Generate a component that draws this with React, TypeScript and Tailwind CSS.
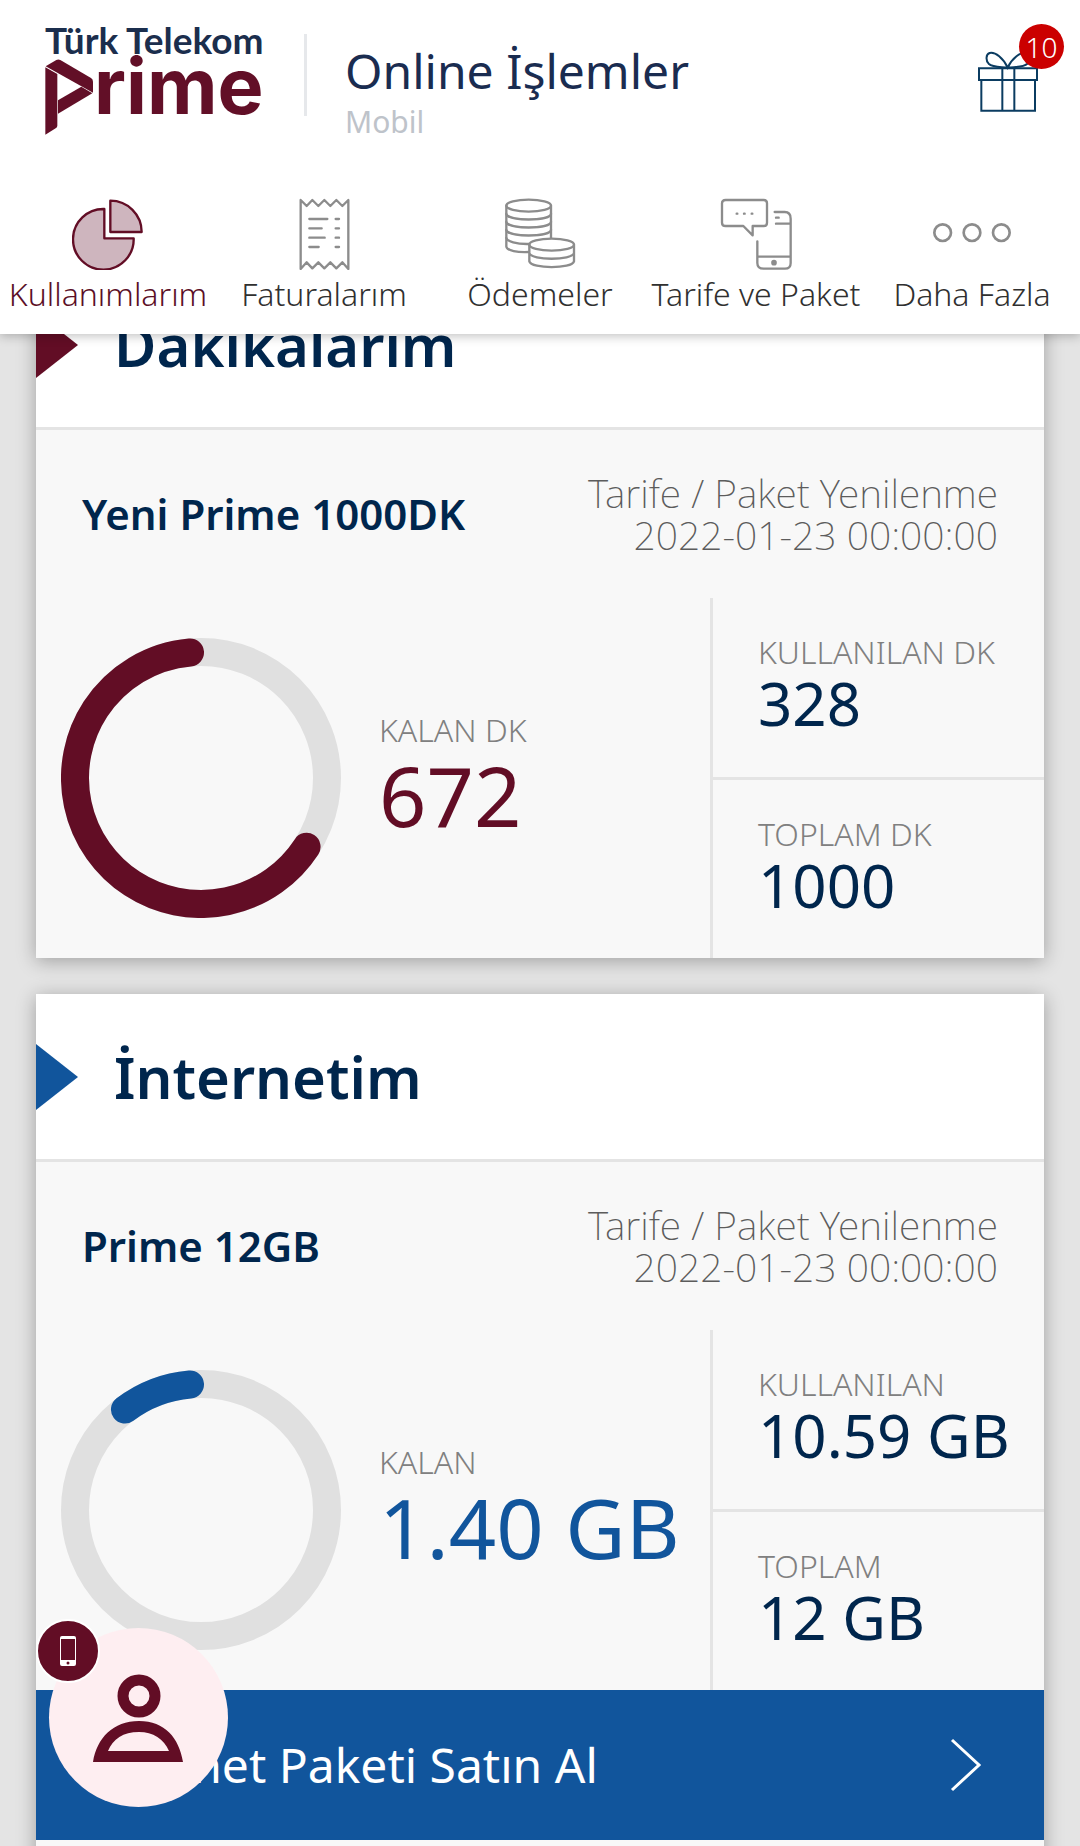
import type { ReactNode } from 'react'

type Accent = 'prime' | 'net'

type Usage = {
  id: string
  title: string
  plan: string
  renewal: string
  accent: Accent
  remaining: { label: string; value: string; ratio: number }
  used: { label: string; value: string }
  total: { label: string; value: string }
  action?: string
}

const USAGES: Usage[] = [
  {
    id: 'minutes',
    title: 'Dakikalarım',
    plan: 'Yeni Prime 1000DK',
    renewal: '2022-01-23 00:00:00',
    accent: 'prime',
    remaining: { label: 'KALAN DK', value: '672', ratio: 0.672 },
    used: { label: 'KULLANILAN DK', value: '328' },
    total: { label: 'TOPLAM DK', value: '1000' },
  },
  {
    id: 'internet',
    title: 'İnternetim',
    plan: 'Prime 12GB',
    renewal: '2022-01-23 00:00:00',
    accent: 'net',
    remaining: { label: 'KALAN', value: '1.40 GB', ratio: 0.117 },
    used: { label: 'KULLANILAN', value: '10.59 GB' },
    total: { label: 'TOPLAM', value: '12 GB' },
    action: 'İnternet Paketi Satın Al',
  },
]

const TEXT_ACCENT = { prime: 'text-[#620d25]', net: 'text-[#11559c]' }

function Logo() {
  return (
    <svg
      viewBox="24 23 660 330"
      className="h-[110px] w-[220px] shrink-0 overflow-visible"
      role="img"
      aria-label="Türk Telekom Prime"
    >
      <text x="27" y="102" fontSize="111" className="font-[Lato] font-bold fill-[#1b2e4d]">
        Türk Telekom
      </text>
      <g className="fill-[#620f27]">
        <path d="M29 138 61 119Q67 116 73 119L165 173Q171 177 171 184V217Z" />
        <path d="M28 141 64 161V316Q64 321 59 324L28 343Z" />
        <path d="M66 240 136 199 169 219 66 280Z" />
        <text x="174" y="280" fontSize="232" className="font-[Inter] font-bold">
          rime
        </text>
      </g>
    </svg>
  )
}

function GiftIcon() {
  return (
    <svg viewBox="54 93 180 183" className="w-[60px] h-[61px]" fill="none" stroke="#0b3c61" strokeWidth="6">
      <path d="M57 145H231V180H57ZM64 180V272H225V180M127 145V272M163 145V272" />
      <path d="M143 143C130 115 106 95 89 99C77 103 77 122 86 131C99 143 124 140 143 143C162 140 189 143 202 131C211 122 211 103 199 99C182 95 156 115 143 143Z" />
    </svg>
  )
}

function NavIcon({ viewBox, children }: { viewBox: string; children: ReactNode }) {
  return (
    <svg
      viewBox={viewBox}
      className="size-[72px]"
      fill="none"
      stroke="currentColor"
      strokeWidth="7"
      strokeLinecap="round"
      strokeLinejoin="round"
      aria-hidden="true"
    >
      {children}
    </svg>
  )
}

const NAV = [
  {
    label: 'Kullanımlarım',
    active: true,
    icon: (
      <NavIcon viewBox="37 22 216 216">
        <g fill="#ceb5be">
          <path d="M134 55V143H222A91 91 0 1 1 134 55Z" />
          <path d="M152 30V124H246A94 94 0 0 0 152 30Z" />
        </g>
      </NavIcon>
    ),
  },
  {
    label: 'Faturalarım',
    icon: (
      <NavIcon viewBox="686 22 216 216">
        <path d="M724 28 742 46 759 28 777 46 795 28 813 46 831 28 849 46 867 28V235L849 215 831 233 813 215 795 233 777 215 759 233 742 215 724 235Z" />
        <path d="M750 85H804M750 113H787M750 141H796M750 169H778M829 85H839M829 113H839M829 141H839M829 169H839" />
      </NavIcon>
    ),
  },
  {
    label: 'Ödemeler',
    icon: (
      <NavIcon viewBox="42 22 216 216">
        <ellipse cx="116" cy="45" rx="67" ry="18" />
        <path d="M49 45V168C52 180 82 186 117 184M183 45V142" />
        <path d="M49 70C54 92 178 92 183 70M49 94C54 116 178 116 183 94M49 118C54 140 178 140 183 118M49 142C52 152 78 161 117 160" />
        <ellipse cx="185" cy="162" rx="67" ry="18" />
        <path d="M118 162V212C124 235 246 235 252 212V162M118 187C124 210 246 210 252 187" />
      </NavIcon>
    ),
  },
  {
    label: 'Tarife ve Paket',
    icon: (
      <NavIcon viewBox="692 22 216 216">
        <path d="M709 28H823Q833 28 833 38V96Q833 106 823 106H790V134L762 106H709Q698 106 698 96V38Q698 28 709 28Z" />
        <path d="M742 69H744M764 69H766M787 69H789" strokeWidth="7" />
        <path d="M856 64H886Q904 64 904 84V217Q904 234 887 234H823Q804 234 804 217V152M860 99H904M860 81H868M806 198H904" />
        <circle cx="854" cy="216" r="5" fill="currentColor" />
      </NavIcon>
    ),
  },
  {
    label: 'Daha Fazla',
    icon: (
      // drawn a bit wider than its box
      <svg
        viewBox="0 0 240 216"
        className="h-[72px] w-20"
        fill="none"
        stroke="currentColor"
        strokeWidth="8"
        aria-hidden="true"
      >
        <circle cx="32" cy="104" r="25" />
        <circle cx="120" cy="104" r="25" />
        <circle cx="208" cy="104" r="25" />
      </svg>
    ),
  },
]

function Header() {
  return (
    <header className="relative z-10 shrink-0 bg-white pt-7 pb-5 shadow-[0_2px_10px_rgba(0,0,0,0.25)]">
      <div className="flex items-start pl-11 pr-[42px]">
        <Logo />
        <div className="ml-10 mt-1.5 h-[82px] w-[3px] bg-[#e6e8eb]" />
        <div className="ml-[38px] mt-[15px] flex-1">
          <h1 className="text-[48px] leading-[56px] text-[#1a2c50]">Online İşlemler</h1>
          <p className="text-[30px] leading-[46px] text-[#bec3ca]">Mobil</p>
        </div>
        <button className="relative mt-[23px]" aria-label="Hediyeler">
          <GiftIcon />
          <span className="absolute -top-[27px] -right-[26px] flex size-[45px] items-center justify-center rounded-full bg-[#cb0000] text-[28px] leading-none font-light text-white">
            10
          </span>
        </button>
      </div>
      <nav className="mt-[53px] grid grid-cols-5">
        {NAV.map((item) => (
          <a key={item.label} href="#" className="flex flex-col items-center gap-1">
            <span className={item.active ? 'text-[#620d25]' : 'text-[#8c8c8c]'}>{item.icon}</span>
            <span
              className={`text-[32px] leading-10 font-light whitespace-nowrap ${
                item.active ? 'text-[#5c0f27]' : 'text-[#303030]'
              }`}
            >
              {item.label}
            </span>
          </a>
        ))}
      </nav>
    </header>
  )
}

function Ring({ ratio, accent }: { ratio: number; accent: Accent }) {
  // Both ends are pulled in so that the round caps stay inside the share.
  const cap = 5
  const start = 360 * (1 - ratio) + cap
  return (
    <svg viewBox="0 0 280 280" className={`size-[280px] shrink-0 ${TEXT_ACCENT[accent]}`} fill="none" strokeWidth="28">
      <circle cx="140" cy="140" r="126" stroke="#e0e0e0" />
      <circle
        cx="140"
        cy="140"
        r="126"
        pathLength="360"
        stroke="currentColor"
        strokeLinecap="round"
        strokeDasharray={`${360 * ratio - cap * 2} 360`}
        transform={`rotate(${start - 90} 140 140)`}
      />
    </svg>
  )
}

function Stat({ label, value }: { label: string; value: string }) {
  return (
    <div className="flex-1 pt-[34px] pl-[45px] whitespace-nowrap">
      <p className="text-[32px] leading-10 font-light text-[#808080]">{label}</p>
      <p className="text-[60px] leading-[62px] text-[#00264d]">{value}</p>
    </div>
  )
}

function UsageCard({ usage }: { usage: Usage }) {
  return (
    <section className="bg-[#f8f8f8] shadow-[0_3px_18px_rgba(0,0,0,0.3)]">
      <div className={`flex h-[168px] items-center border-b-[3px] border-[#e4e4e4] bg-white ${TEXT_ACCENT[usage.accent]}`}>
        <svg viewBox="0 0 42 66" className="h-[66px] w-[42px]" fill="currentColor" aria-hidden="true">
          <path d="M0 0 42 33 0 66Z" />
        </svg>
        <h2 className="ml-9 text-[58px] leading-[64px] font-semibold text-[#00264d]">{usage.title}</h2>
      </div>

      <div className="flex items-center justify-between pt-[42px] pr-[46px] pb-[42px] pl-[46px]">
        <h3 className="text-[42px] leading-[48px] font-semibold text-[#00264d]">{usage.plan}</h3>
        <p className="text-right text-[39px] leading-[42px] font-extralight text-[#5c5c5c]">
          Tarife / Paket Yenilenme
          <br />
          {usage.renewal}
        </p>
      </div>

      <div className="flex h-[360px]">
        <div className="flex flex-1 items-center gap-[38px] pl-[25px]">
          <Ring ratio={usage.remaining.ratio} accent={usage.accent} />
          <div className="pb-1.5 whitespace-nowrap">
            <p className="text-[32px] leading-10 font-light text-[#808080]">{usage.remaining.label}</p>
            <p className={`text-[83px] leading-[90px] ${TEXT_ACCENT[usage.accent]}`}>{usage.remaining.value}</p>
          </div>
        </div>
        <div className="flex w-[334px] flex-col divide-y-[3px] divide-[#e4e4e4] border-l-[3px] border-[#e4e4e4]">
          <Stat {...usage.used} />
          <Stat {...usage.total} />
        </div>
      </div>

      {usage.action && (
        <div className="pb-9">
          <button className="flex h-[150px] w-full items-center justify-between bg-[#11559c] pr-[62px] pl-[46px] text-white">
            <span className="text-[48px] leading-[56px]">{usage.action}</span>
            <svg viewBox="0 0 32 54" className="h-[54px] w-8" fill="none" stroke="currentColor" strokeWidth="3" aria-hidden="true">
              <path d="M2 2 29 27 2 52" />
            </svg>
          </button>
        </div>
      )}
    </section>
  )
}

function ProfileButton() {
  return (
    <button
      className="fixed bottom-[39px] left-[49px] z-20 flex size-[179px] items-center justify-center rounded-full bg-[#feeef1]"
      aria-label="Profil"
    >
      <svg viewBox="0 0 92 88" className="h-[88px] w-[92px]" fill="#620d25">
        <circle cx="46" cy="22" r="16" fill="none" stroke="#620d25" strokeWidth="11" />
        <path
          fillRule="evenodd"
          d="M0 88C4 64 20 47 46 47C72 47 86 64 90 88ZM15 77H76C71 65 60 58 46 58C30 58 20 65 15 77Z"
        />
      </svg>
      <span className="absolute -top-[9px] -left-[13px] flex size-16 items-center justify-center rounded-full border-2 border-white bg-[#620d25]">
        <svg viewBox="0 0 16 30" className="h-[30px] w-4" aria-hidden="true">
          <path
            fill="#fff"
            fillRule="evenodd"
            d="M2 0H14Q16 0 16 2V28Q16 30 14 30H2Q0 30 0 28V2Q0 0 2 0ZM1 3V24H15V3ZM8 25.500A1.500 1.500 0 1 0 8 28.500A1.500 1.500 0 1 0 8 25.500Z"
          />
        </svg>
      </span>
    </button>
  )
}

export default function App() {
  return (
    <div className="flex h-screen flex-col overflow-hidden bg-[#e4e4e4] font-['Noto_Sans',sans-serif]">
      <Header />
      {/* scrolled a little, so the first card starts behind the header */}
      <main className="-mt-[72px] flex-1 space-y-9 px-9">
        {USAGES.map((usage) => (
          <UsageCard key={usage.id} usage={usage} />
        ))}
      </main>
      <ProfileButton />
    </div>
  )
}
